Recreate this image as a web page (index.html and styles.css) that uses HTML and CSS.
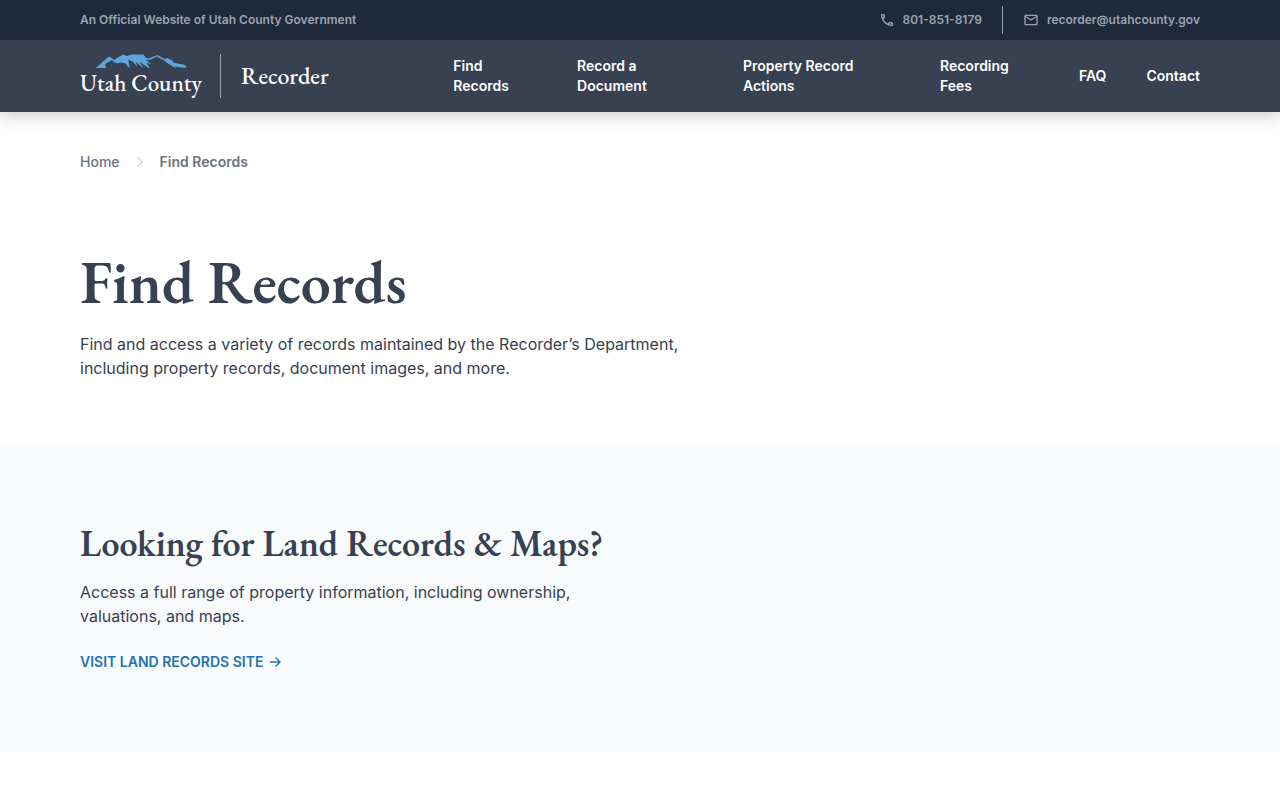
FILE: index.html
```html
<!DOCTYPE html>
<html lang="en">
<head>
<meta charset="utf-8">
<meta name="viewport" content="width=device-width, initial-scale=1">
<title>Find Records</title>
<link rel="stylesheet" href="styles.css">
</head>
<body>
<header class="site-header">
  <div class="topbar">
    <div class="container topbar-inner">
      <span>An Official Website of Utah County Government</span>
      <div class="contact">
        <a class="contact-link phone" href="tel:8018518179">
          <svg class="icon" viewBox="0 0 24 24" aria-hidden="true"><path d="M6.540 5c.06.890.210 1.760.450 2.590l-1.200 1.200c-.410-1.200-.670-2.470-.760-3.790h1.510m9.860 12.020c.850.240 1.720.390 2.600.450v1.490c-1.320-.090-2.590-.350-3.800-.750l1.200-1.190M7.500 3H4c-.550 0-1 .450-1 1 0 9.390 7.610 17 17 17 .550 0 1-.450 1-1v-3.490c0-.550-.450-1-1-1-1.240 0-2.450-.200-3.570-.570-.350-.120-.740-.030-1.020.240l-2.200 2.200c-2.830-1.450-5.150-3.760-6.590-6.590l2.200-2.200c.280-.280.360-.670.250-1.020C8.700 6.450 8.500 5.250 8.500 4c0-.550-.450-1-1-1z"/></svg>
          801-851-8179
        </a>
        <a class="contact-link" href="mailto:recorder@utahcounty.gov">
          <svg class="icon" viewBox="0 0 24 24" aria-hidden="true"><path d="M22 6c0-1.100-.900-2-2-2H4c-1.100 0-2 .900-2 2v12c0 1.100.900 2 2 2h16c1.100 0 2-.900 2-2V6zm-2 0-8 5-8-5h16zm0 12H4V8l8 5 8-5v10z"/></svg>
          recorder@utahcounty.gov
        </a>
      </div>
    </div>
  </div>
  <div class="navbar">
    <div class="container navbar-inner">
      <div class="brand">
        <a class="logo" href="#">
          <svg class="mountains" viewBox="0 0 90 14" aria-hidden="true"><path d="M0 14 7 7.500l6-5 2.500 1.500 3 2 2-1.500 3-2 4-2 3 1.500 6-1.500h11l2 3 3 1 5-2 4-1.500 7 4 3-1 5 2.500 1 2 4 1 6 1 4 2.500-2 1-8-1-3-1 3 3-9-5-5-4-7-3.500-5 3-4 .500-2-.500 6 5-5-2 4 7-7-5-4-3 4 7-8-7 2 5-5-5-4-2 1 9-4-5-5-1-3 1-3-1-2.500-2.500L9 10l1 4z"/></svg>
          <span class="logo-name">Utah County</span>
        </a>
        <a class="department" href="#">Recorder</a>
      </div>
      <nav class="nav" aria-label="Main">
        <a href="#">Find Records</a>
        <a href="#">Record a Document</a>
        <a href="#">Property Record Actions</a>
        <a href="#">Recording Fees</a>
        <a href="#">FAQ</a>
        <a href="#">Contact</a>
      </nav>
    </div>
  </div>
</header>
<main>
  <section class="hero container">
    <nav class="breadcrumb" aria-label="Breadcrumb">
      <a href="#">Home</a>
      <svg class="chevron" viewBox="0 0 8 12" aria-hidden="true"><path d="m1.500 1 5 5-5 5"/></svg>
      <span class="current">Find Records</span>
    </nav>
    <h1 class="title">Find Records</h1>
    <p class="intro">Find and access a variety of records maintained by the Recorder’s Department, including property records, document images, and more.</p>
  </section>
  <section class="callout">
    <div class="container">
      <h2 class="subtitle">Looking for Land Records &amp; Maps?</h2>
      <p class="summary">Access a full range of property information, including ownership, valuations, and maps.</p>
      <a class="visit" href="#">Visit Land Records Site
        <svg class="arrow" viewBox="0 0 12 12" aria-hidden="true"><path d="M1 6h10M6.500 1.500 11 6l-4.500 4.500"/></svg>
      </a>
    </div>
  </section>
</main>
</body>
</html>
```
FILE: styles.css
```css
* { box-sizing: border-box; }

body {
  margin: 0;
  background: #fff;
  color: #374151;
  font: 16px/24px Inter, "Liberation Sans", sans-serif;
}

a { color: inherit; text-decoration: none; }
h1, h2, p { margin: 0; }
svg { flex: none; fill: none; stroke: currentColor; }

.container { padding: 0 80px; }

.site-header {
  position: relative;
  box-shadow: 0 4px 16px rgba(0, 0, 0, 0.2);
}

.topbar {
  background: #1e293b;
  color: #9ca3af;
  font-size: 12px;
  font-weight: 600;
  line-height: 28px;
}

.topbar-inner {
  display: flex;
  align-items: center;
  justify-content: space-between;
  min-height: 40px;
}

.contact, .contact-link { display: flex; align-items: center; }
.contact-link { gap: 8px; }
.phone { padding-right: 20px; margin-right: 20px; border-right: 1px solid #9ca3af; }
.icon { width: 16px; height: 16px; fill: currentColor; stroke: none; }

.navbar { background: #374151; color: #fff; }

.navbar-inner {
  display: flex;
  align-items: center;
  min-height: 72px;
}

.brand { display: flex; align-items: center; flex: 0 0 33.333%; }

.logo {
  display: flex;
  flex-direction: column;
  width: 120px;
  font: 500 23px/30px "EB Garamond", "Liberation Serif", serif;
  white-space: nowrap;
}

.mountains { width: 90px; height: 14px; margin-left: 16px; fill: #5fa5dd; stroke: none; }

.department {
  margin-left: 20px;
  padding-left: 20px;
  border-left: 1px solid #9ca3af;
  font: 500 24px/44px "EB Garamond", "Liberation Serif", serif;
}

.nav {
  display: flex;
  flex: 1;
  align-items: center;
  gap: 40px;
  font-size: 14px;
  font-weight: 600;
  line-height: 20px;
}

.hero { padding-top: 40px; padding-bottom: 64px; }

.breadcrumb {
  display: flex;
  align-items: center;
  gap: 16px;
  margin-bottom: 76px;
  color: #6b7280;
  font-size: 14px;
  font-weight: 500;
  line-height: 20px;
}

.current { font-weight: 600; }
.chevron { width: 8px; height: 12px; stroke: #b4b8c0; }

.title, .subtitle {
  font-family: "EB Garamond", "Liberation Serif", serif;
  font-weight: 600;
}

.title { margin-bottom: 16px; font-size: 60px; line-height: 68px; }
.intro { max-width: 640px; }

.callout { padding: 76px 0 80px; background: #f8fafc; }
.subtitle { margin-bottom: 12px; font-size: 36px; line-height: 48px; }
.summary { max-width: 540px; margin-bottom: 24px; }

.visit {
  display: flex;
  width: fit-content;
  align-items: center;
  gap: 6px;
  color: #2272b1;
  font-size: 14px;
  font-weight: 600;
  line-height: 20px;
  text-transform: uppercase;
}

.arrow { width: 12px; height: 12px; stroke-width: 1.3; }
```
